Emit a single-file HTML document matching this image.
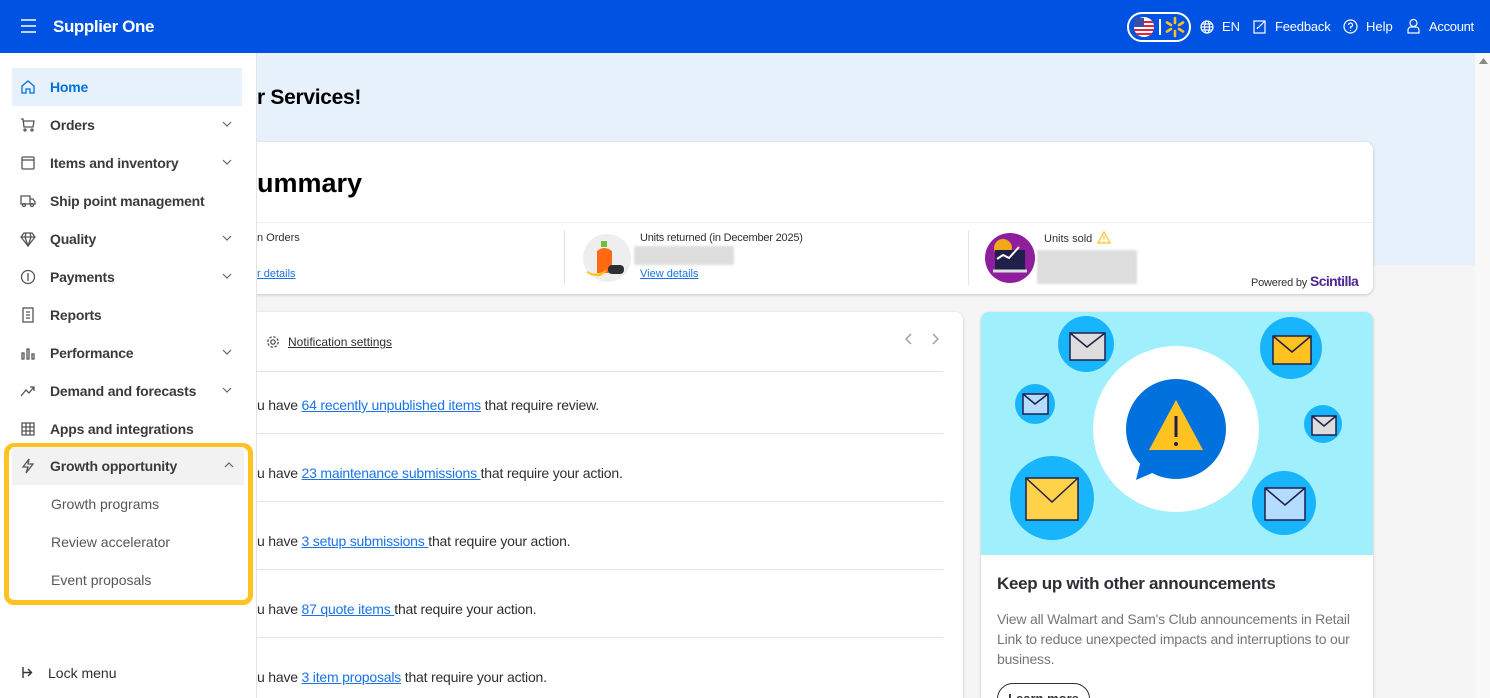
<!DOCTYPE html>
<html style="width:1490px;height:698px;overflow:hidden"><head><meta charset="utf-8"><style>
*{box-sizing:border-box;margin:0;padding:0}
body{width:1490px;height:698px;overflow:hidden;position:relative;font-family:"Liberation Sans",sans-serif;background:#f5f5f5;color:#2e2f32}
.a{position:absolute}
.hdr{left:0;top:0;width:1490px;height:53px;background:#0053e2;color:#fff}
.side{left:0;top:53px;width:257px;height:645px;background:#fff;border-right:1px solid #e3e4e5}
.it{position:absolute;left:12px;width:230px;height:38px;font-size:14px;font-weight:bold;color:#3a3b3d;line-height:38px;padding-left:38px;letter-spacing:-.2px}
.it svg.ic{position:absolute;left:8px;top:11px}
.chev{position:absolute;right:10px;top:15px}
.sub{position:absolute;left:51px;font-size:14px;color:#55565a}
.card{background:#fff;border-radius:8px;box-shadow:0 1px 3px rgba(0,0,0,.2)}
.row{position:absolute;left:257px;width:686px;border-top:1px solid #e3e4e5;height:68px;font-size:14px;color:#2e2f32}
.row span{position:absolute;left:0;top:24px;letter-spacing:-.2px}
a{color:#1a73e8;text-decoration:underline}
</style></head><body>
<div class="a hdr">
<svg class="a" style="left:21px;top:19px" width="15" height="14"><path d="M0 1H15M0 7H15M0 13H15" stroke="#fff" stroke-width="1.5"/></svg>
<div class="a" style="left:53px;top:17px;font-size:17px;font-weight:bold;letter-spacing:-.4px">Supplier One</div>
<div class="a" style="left:1127px;top:12px;width:64px;height:30px;border:2px solid #fff;border-radius:15px"></div>
<svg class="a" style="left:1133px;top:16px" width="22" height="22"><circle cx="11" cy="11" r="10" fill="#fff"/><path d="M2 6H20M1 10H21M1 14H21M3 18H19" stroke="#e1253b" stroke-width="2"/><path d="M2 2H11V11H1Z" fill="#3b4fa3"/></svg>
<div class="a" style="left:1159px;top:19px;width:1.5px;height:16px;background:#fff"></div>
<svg class="a" style="left:1164px;top:16px" width="22" height="22"><g stroke="#ffc220" stroke-width="2.6" stroke-linecap="round"><path d="M11 2V7M11 15V20M3 6.5L7 9M19 6.5L15 9M3 15.5L7 13M19 15.5L15 13"/></g></svg>
<svg class="a" style="left:1200px;top:20px" width="14" height="14" fill="none" stroke="#fff" stroke-width="1.2"><circle cx="7" cy="7" r="6"/><ellipse cx="7" cy="7" rx="2.5" ry="6"/><path d="M1 7H13M2 4H12M2 10H12"/></svg>
<div class="a" style="left:1222px;top:19px;font-size:13px">EN</div>
<svg class="a" style="left:1253px;top:19px" width="14" height="15" fill="none" stroke="#fff" stroke-width="1.2"><rect x="1" y="2" width="11" height="12"/><path d="M5 9L12 2M4 10L5 8"/></svg>
<div class="a" style="left:1275px;top:19px;font-size:13px;letter-spacing:-.2px">Feedback</div>
<svg class="a" style="left:1343px;top:19px" width="15" height="15" fill="none" stroke="#fff" stroke-width="1.2"><circle cx="7.5" cy="7.5" r="6.5"/><path d="M5.5 6a2 2 0 1 1 2 2v1.5M7.5 11v1"/></svg>
<div class="a" style="left:1366px;top:19px;font-size:13px">Help</div>
<svg class="a" style="left:1407px;top:18px" width="13" height="16" fill="none" stroke="#fff" stroke-width="1.2"><circle cx="6.5" cy="5" r="3.5"/><path d="M1 15V12a3 3 0 0 1 3-3h5a3 3 0 0 1 3 3v3Z"/></svg>
<div class="a" style="left:1429px;top:19px;font-size:13px;letter-spacing:-.3px">Account</div>
</div>

<div class="a" style="left:257px;top:53px;width:1218px;height:212px;background:#e6f1fc"></div>
<div class="a" style="left:1475px;top:53px;width:15px;height:645px;background:#f8f8f8"></div>
<svg class="a" style="left:1479px;top:57px" width="9" height="7"><path d="M0 7L4.5 1L9 7Z" fill="#888"/></svg>
<div class="a" style="left:257px;top:86px;font-size:21px;font-weight:bold;color:#000;letter-spacing:-.3px">r Services!</div>

<div class="a card" style="left:200px;top:142px;width:1173px;height:152px"></div>
<div class="a" style="left:257px;top:168px;font-size:27px;font-weight:bold;color:#000">ummary</div>
<div class="a" style="left:257px;top:222px;width:1115px;height:1px;background:#eee"></div>
<div class="a" style="left:257px;top:232px;font-size:11px">n Orders</div>
<div class="a" style="left:257px;top:268px;font-size:11px"><a>r details</a></div>
<div class="a" style="left:564px;top:230px;width:1px;height:55px;background:#e3e4e5"></div>
<svg class="a" style="left:582px;top:233px" width="50" height="50"><circle cx="25" cy="25" r="24" fill="#eee"/><rect x="19" y="8" width="6" height="6" fill="#6fbf3a"/><path d="M15 18Q22 12 30 18V40H15Z" fill="#ff6a13"/><path d="M5 38Q15 44 25 36Q20 48 5 40Z" fill="#ffc220"/><rect x="26" y="32" width="16" height="9" rx="4" fill="#2e2f32"/></svg>
<div class="a" style="left:640px;top:232px;font-size:11px;letter-spacing:-.2px">Units returned (in December 2025)</div>
<div class="a" style="left:634px;top:246px;width:100px;height:19px;background:#ddd;filter:blur(1px)"></div>
<div class="a" style="left:640px;top:268px;font-size:11px"><a>View details</a></div>
<div class="a" style="left:968px;top:230px;width:1px;height:55px;background:#e3e4e5"></div>
<svg class="a" style="left:985px;top:233px" width="50" height="50"><circle cx="25" cy="25" r="25" fill="#8e1e9c"/><circle cx="18" cy="15" r="9" fill="#f0a818"/><rect x="10" y="17" width="30" height="20" fill="#1f1f4a"/><path d="M12 26L18 22L24 25L34 14" stroke="#fff" stroke-width="2" fill="none"/><path d="M8 38H42" stroke="#ddd" stroke-width="3"/></svg>
<div class="a" style="left:1044px;top:233px;font-size:11px">Units sold</div>
<svg class="a" style="left:1097px;top:231px" width="14" height="13"><path d="M7 1L13 12H1Z" fill="none" stroke="#ffc220" stroke-width="1.3"/><path d="M7 5V8.5M7 10V11" stroke="#ffc220" stroke-width="1.3"/></svg>
<div class="a" style="left:1037px;top:250px;width:100px;height:34px;background:#ddd;filter:blur(1px)"></div>
<div class="a" style="left:1251px;top:273px;font-size:11px;color:#2e2f32;letter-spacing:-.2px">Powered by <b style="color:#4b2991;font-size:14px;letter-spacing:-.6px">Scintilla</b></div>

<div class="a card" style="left:200px;top:312px;width:763px;height:386px;border-radius:8px 8px 0 0"></div>
<svg class="a" style="left:266px;top:335px" width="14" height="14" fill="none" stroke="#444" stroke-width="1.2"><circle cx="7" cy="7" r="2.2"/><circle cx="7" cy="7" r="5.2" stroke-dasharray="2.5 1.6"/></svg>
<div class="a" style="left:288px;top:335px;font-size:12px;text-decoration:underline">Notification settings</div>
<svg class="a" style="left:904px;top:333px" width="36" height="12" fill="none" stroke="#999" stroke-width="1.3"><path d="M7 1L2 6L7 11M29 1L34 6L29 11"/></svg>
<div class="row" style="top:371px;height:62px"><span style="top:25px">u have <a>64 recently unpublished items</a> that require review.</span></div>
<div class="row" style="top:433px"><span style="top:31px">u have <a>23 maintenance submissions </a>that require your action.</span></div>
<div class="row" style="top:501px"><span style="top:31px">u have <a>3 setup submissions </a>that require your action.</span></div>
<div class="row" style="top:569px"><span style="top:31px">u have <a>87 quote items </a>that require your action.</span></div>
<div class="row" style="top:637px"><span style="top:31px">u have <a>3 item proposals</a> that require your action.</span></div>

<div class="a card" style="left:981px;top:312px;width:392px;height:386px;overflow:hidden;border-radius:8px 8px 0 0">
<svg width="392" height="243" style="display:block;background:#a0effc">
<circle cx="195" cy="117" r="83" fill="#fff"/>
<circle cx="195" cy="117" r="50" fill="#0071dc"/><path d="M155 168L162 140L178 158Z" fill="#0071dc"/>
<path d="M195 88L222 138H168Z" fill="#ffc220"/><path d="M195 104V125" stroke="#1f1f4a" stroke-width="3"/><circle cx="195" cy="132" r="2" fill="#1f1f4a"/>
<g fill="#18b5fd"><circle cx="105" cy="32" r="28"/><circle cx="310" cy="36" r="31"/><circle cx="54" cy="92" r="20"/><circle cx="342" cy="112" r="19"/><circle cx="71" cy="186" r="42"/><circle cx="303" cy="191" r="32"/></g>
<g stroke="#1f1f4a" stroke-width="1.5"><rect x="89" y="21" width="35" height="27" fill="#ddd"/><path d="M89 21L106 35L124 21" fill="none"/>
<rect x="292" y="24" width="38" height="28" fill="#ffc220"/><path d="M292 24L311 40L330 24" fill="none"/>
<rect x="42" y="82" width="25" height="20" fill="#b3dcff"/><path d="M42 82L54 92L67 82" fill="none"/>
<rect x="331" y="104" width="24" height="19" fill="#ddd"/><path d="M331 104L343 114L355 104" fill="none"/>
<rect x="45" y="166" width="52" height="42" fill="#ffd24a"/><path d="M45 166L71 190L97 166" fill="none"/>
<rect x="284" y="176" width="40" height="32" fill="#b3dcff"/><path d="M284 176L304 193L324 176" fill="none"/></g>
</svg>
<div style="position:absolute;left:16px;top:262px;font-size:17px;font-weight:bold;color:#2e2f32;letter-spacing:-.3px">Keep up with other announcements</div>
<div style="position:absolute;left:16px;top:297px;width:370px;font-size:14px;line-height:20px;color:#74767c;letter-spacing:-.2px">View all Walmart and Sam's Club announcements in Retail Link to reduce unexpected impacts and interruptions to our business.</div>
<div style="position:absolute;left:16px;top:371px;width:93px;height:32px;border:1.5px solid #2e2f32;border-radius:16px;font-size:13px;font-weight:bold;text-align:center;line-height:30px">Learn more</div>
</div>

<div class="a side">
<div class="it" style="top:15px;background:#e6f1fc;color:#0071dc"><svg class="ic" width="16" height="16" fill="none" stroke="#0071dc" stroke-width="1.3"><path d="M2 7L8 2L14 7V14H10V10H6V14H2Z"/></svg>Home</div>
<div class="it" style="top:53px"><svg class="ic" width="16" height="16" fill="none" stroke="#555" stroke-width="1.3"><path d="M1 2H3L4 10H13L14 4H3.5"/><circle cx="5" cy="13" r="1"/><circle cx="12" cy="13" r="1"/></svg>Orders<svg class="chev" width="10" height="6" fill="none" stroke="#666" stroke-width="1.2"><path d="M1 1L5 5L9 1"/></svg></div>
<div class="it" style="top:91px"><svg class="ic" width="16" height="16" fill="none" stroke="#555" stroke-width="1.3"><rect x="2" y="2" width="12" height="12" rx="1"/><path d="M2 5H14"/></svg>Items and inventory<svg class="chev" width="10" height="6" fill="none" stroke="#666" stroke-width="1.2"><path d="M1 1L5 5L9 1"/></svg></div>
<div class="it" style="top:129px"><svg class="ic" width="16" height="16" fill="none" stroke="#555" stroke-width="1.3"><path d="M1 3H10V11H1ZM10 6H13L15 9V11H10"/><circle cx="4" cy="12" r="1.5"/><circle cx="12" cy="12" r="1.5"/></svg>Ship point management</div>
<div class="it" style="top:167px"><svg class="ic" width="16" height="16" fill="none" stroke="#555" stroke-width="1.3"><path d="M4 2H12L15 6L8 15L1 6ZM1 6H15M6 2L5 6L8 15L11 6L10 2"/></svg>Quality<svg class="chev" width="10" height="6" fill="none" stroke="#666" stroke-width="1.2"><path d="M1 1L5 5L9 1"/></svg></div>
<div class="it" style="top:205px"><svg class="ic" width="16" height="16" fill="none" stroke="#555" stroke-width="1.3"><circle cx="8" cy="8" r="6.5"/><path d="M8 4V12"/></svg>Payments<svg class="chev" width="10" height="6" fill="none" stroke="#666" stroke-width="1.2"><path d="M1 1L5 5L9 1"/></svg></div>
<div class="it" style="top:243px"><svg class="ic" width="16" height="16" fill="none" stroke="#555" stroke-width="1.3"><rect x="3" y="1" width="10" height="14"/><path d="M6 5H10M6 8H10M6 11H10"/></svg>Reports</div>
<div class="it" style="top:281px"><svg class="ic" width="16" height="16" fill="none" stroke="#555" stroke-width="1.3"><path d="M2 8H4V14H2ZM7 4H9V14H7ZM12 9H14V14H12Z"/></svg>Performance<svg class="chev" width="10" height="6" fill="none" stroke="#666" stroke-width="1.2"><path d="M1 1L5 5L9 1"/></svg></div>
<div class="it" style="top:319px"><svg class="ic" width="16" height="16" fill="none" stroke="#555" stroke-width="1.3"><path d="M1 13L6 7L9 10L14 4M10 4H14V8"/></svg>Demand and forecasts<svg class="chev" width="10" height="6" fill="none" stroke="#666" stroke-width="1.2"><path d="M1 1L5 5L9 1"/></svg></div>
<div class="it" style="top:357px"><svg class="ic" width="16" height="16" fill="none" stroke="#555" stroke-width="1.3"><path d="M2 2H14V14H2ZM2 6H14M2 10H14M6 2V14M10 2V14"/></svg>Apps and integrations</div>
<div class="a" style="left:4px;top:390px;width:249px;height:162px;border:5px solid #ffc220;border-radius:10px"></div>
<div class="it" style="top:394px;background:#f2f2f2;width:232px"><svg class="ic" width="16" height="16" fill="none" stroke="#555" stroke-width="1.3"><path d="M9 1L3 9H8L6 15L13 6H8Z"/></svg>Growth opportunity<svg class="chev" width="10" height="6" fill="none" stroke="#666" stroke-width="1.2"><path d="M1 5L5 1L9 5"/></svg></div>
<div class="sub" style="top:443px">Growth programs</div>
<div class="sub" style="top:481px">Review accelerator</div>
<div class="sub" style="top:519px">Event proposals</div>
<svg class="a" style="left:21px;top:613px" width="12" height="13" fill="none" stroke="#333" stroke-width="1.4"><path d="M2 1V12M2 6.5H10M7 3L10.5 6.5L7 10"/></svg>
<div class="a" style="left:48px;top:612px;font-size:14px;color:#2e2f32">Lock menu</div>
</div>
</body></html>
